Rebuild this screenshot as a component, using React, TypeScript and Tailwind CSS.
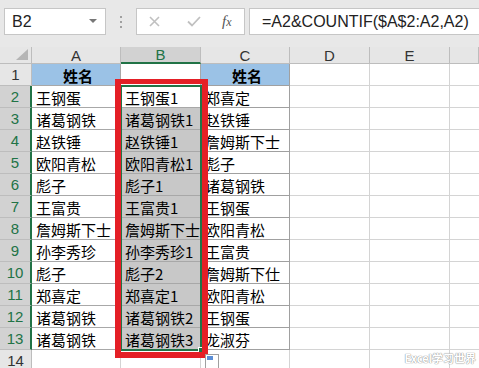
import React from 'react';

const colA = ['姓名', '王钢蛋', '诸葛钢铁', '赵铁锤', '欧阳青松', '彪子', '王富贵', '詹姆斯下士', '孙李秀珍', '彪子', '郑喜定', '诸葛钢铁', '诸葛钢铁'];
const colB = ['', '王钢蛋1', '诸葛钢铁1', '赵铁锤1', '欧阳青松1', '彪子1', '王富贵1', '詹姆斯下士', '孙李秀珍1', '彪子2', '郑喜定1', '诸葛钢铁2', '诸葛钢铁3'];
const colC = ['姓名', '郑喜定', '赵铁锤', '詹姆斯下士', '彪子', '诸葛钢铁', '王钢蛋', '欧阳青松', '王富贵', '詹姆斯下仕', '欧阳青松', '王钢蛋', '龙淑芬'];

const cjk = "font-['Noto_Sans_CJK_SC','Microsoft_YaHei',sans-serif]";
const lat = "font-['Liberation_Sans',Arial,sans-serif]";

function Cell({ text, cls }: { text: string; cls: string }) {
  return (
    <div className={`flex items-center overflow-hidden whitespace-nowrap border-r border-b pl-[4px] pt-[1px] text-[15px] leading-none text-black ${cjk} ${cls}`}>
      {text}
    </div>
  );
}

export default function App() {
  const rows = Array.from({ length: 13 }, (_, i) => i);
  return (
    <div className="relative h-[368px] w-[479px] overflow-hidden bg-white">
      {/* toolbar */}
      <div className="flex h-[47px] items-start gap-0 bg-[#e8e8e8] pt-[8px] pl-[4px]">
        <div className="flex h-[27px] w-[102px] items-center justify-between border border-[#c6c6c6] bg-white pl-[7px] pr-[8px]">
          <span className={`text-[16px] text-[#222] ${lat}`}>B2</span>
          <svg width="8" height="5" viewBox="0 0 8 5"><path d="M0 0h8L4 4z" fill="#777" /></svg>
        </div>
        <div className="flex h-[27px] w-[30px] flex-col items-center justify-center gap-[3px]">
          <span className="h-[2px] w-[2px] bg-[#a0a0a0]" />
          <span className="h-[2px] w-[2px] bg-[#a0a0a0]" />
          <span className="h-[2px] w-[2px] bg-[#a0a0a0]" />
        </div>
        <div className="flex h-[27px] w-[109px] items-center border border-[#c6c6c6] bg-white">
          <svg className="ml-[12px]" width="11" height="11" viewBox="0 0 11 11"><path d="M1 1L10 10M10 1L1 10" stroke="#c0c0c0" strokeWidth="1.6" /></svg>
          <svg className="ml-[27px]" width="14" height="11" viewBox="0 0 14 11"><path d="M1 5.5L5 9.5L13 1" stroke="#c0c0c0" strokeWidth="1.8" fill="none" /></svg>
          <span className="ml-[21px] font-['Liberation_Serif',serif] text-[15px] italic text-[#555]">f<span className="text-[12px]">x</span></span>
        </div>
        <div className="ml-[4px] flex h-[27px] flex-1 items-center border border-r-0 border-[#c6c6c6] bg-white pl-[12px]">
          <span className={`text-[16px] text-[#222] ${lat}`}>=A2&amp;COUNTIF($A$2:A2,A2)</span>
        </div>
      </div>

      {/* grid */}
      <div className="grid grid-cols-[32px_89px_80px_89px_80px_80px_1fr] grid-rows-[17px_repeat(14,22px)]">
        {/* header row */}
        <div className="relative border-r border-b border-[#bdbdbd] bg-[#e6e6e6]">
          <svg className="absolute right-[3px] bottom-[3px]" width="12" height="11" viewBox="0 0 12 11"><path d="M12 0V11H0z" fill="#b5b5b5" /></svg>
        </div>
        {['A', 'B', 'C', 'D', 'E', ''].map((l) => (
          <div
            key={l || 'F'}
            className={`flex items-center justify-center border-r text-[15px] leading-none ${lat} ${
              l === 'B' ? 'border-b-2 border-r-[#bdbdbd] border-b-[#217346] bg-[#d2d2d2] text-[#217346]' : 'border-b border-[#bdbdbd] bg-[#e6e6e6] text-[#333]'
            }`}
          >
            {l}
          </div>
        ))}

        {rows.map((i) => {
          const hl = i >= 1;
          return (
            <React.Fragment key={i}>
              <div
                className={`flex items-center justify-center border-b text-[15px] leading-none ${lat} ${
                  hl ? 'border-r-2 border-r-[#217346] border-b-[#bdbdbd] bg-[#d2d2d2] text-[#217346]' : 'border-r border-[#bdbdbd] bg-[#e6e6e6] text-[#333]'
                }`}
              >
                {i + 1}
              </div>
              <Cell
                text={colA[i]}
                cls={`border-[#a8a8a8] ${i === 0 ? 'justify-center bg-[#9bc2e6] font-bold' : ''}`}
              />
              <Cell
                text={colB[i]}
                cls={`border-[#a8a8a8] ${i >= 2 ? 'bg-[#c8c8c8]' : ''}`}
              />
              <Cell
                text={colC[i]}
                cls={`border-[#a0a0a0] ${i === 0 ? 'justify-center bg-[#9bc2e6] font-bold' : ''}`}
              />
              <div className="border-r border-b border-[#d4d4d4]" />
              <div className="border-r border-b border-[#d4d4d4]" />
              <div className="border-b border-[#d4d4d4]" />
            </React.Fragment>
          );
        })}

        {/* row 14 */}
        <div className={`flex items-center justify-center border-r border-b border-[#bdbdbd] bg-[#e6e6e6] text-[15px] leading-none text-[#333] ${lat}`}>14</div>
        <div className="border-r border-b border-[#d4d4d4]" />
        <div className="border-r border-b border-[#d4d4d4]" />
        <div className="border-r border-b border-[#d4d4d4]" />
        <div className="border-r border-b border-[#d4d4d4]" />
        <div className="border-r border-b border-[#d4d4d4]" />
        <div className="border-b border-[#d4d4d4]" />
      </div>

      {/* selection border B2:B13 */}
      <div className="pointer-events-none absolute left-[120px] top-[85px] h-[266px] w-[82px] border-2 border-[#217346]" />
      <div className="absolute left-[198px] top-[347px] h-[6px] w-[6px] border border-white bg-[#217346]" />

      {/* red annotation */}
      <div className="pointer-events-none absolute left-[115px] top-[79px] h-[279px] w-[93px] border-[6px] border-t-[5px] border-[#e41f26]" />

      {/* paste options icon */}
      <div className="absolute left-[205px] top-[354px] h-[16px] w-[14px] border border-[#a0a0a0] bg-white">
        <div className="ml-[1px] mt-[1px] h-[4px] w-[6px] bg-[#5b8ed6]" />
      </div>

      {/* watermark */}
      <div className={`absolute right-[3px] top-[350px] text-[11px] font-bold text-white [text-shadow:0_0_1px_#8a8a8a,0_0_1px_#8a8a8a] ${cjk}`}>
        Excel学习世界
      </div>
    </div>
  );
}
